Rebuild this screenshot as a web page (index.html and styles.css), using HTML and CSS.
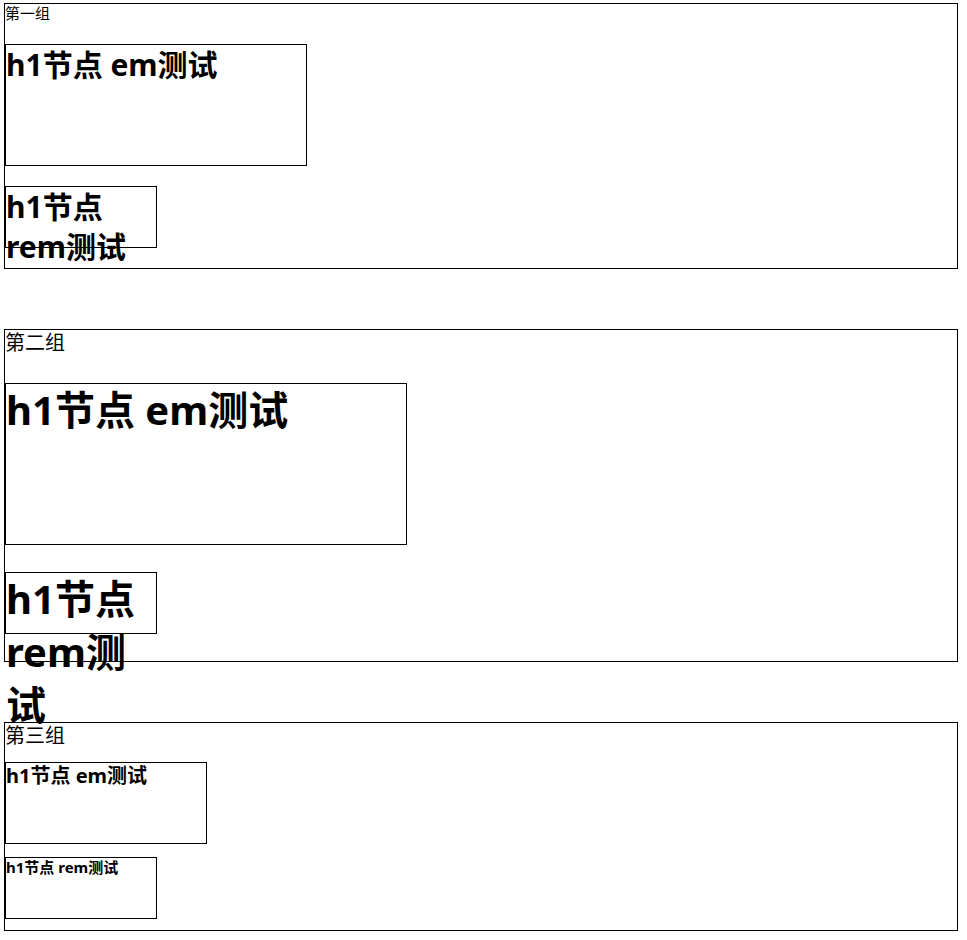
FILE: index.html
```html
<!DOCTYPE html>
<html lang="zh-CN">
<head>
<meta charset="utf-8">
<title>em rem 测试</title>
<link rel="stylesheet" href="styles.css">
</head>
<body>
  <div class="group g1">
    <div class="label">第一组</div>
    <h1 class="box-em">h1节点 em测试</h1>
    <h1 class="box-rem">h1节点 rem测试</h1>
  </div>
  <div class="group g2">
    <div class="label">第二组</div>
    <h1 class="box-em">h1节点 em测试</h1>
    <h1 class="box-rem">h1节点 rem测试</h1>
  </div>
  <div class="group g3">
    <div class="label">第三组</div>
    <h1 class="box-em">h1节点 em测试</h1>
    <h1 class="box-rem">h1节点 rem测试</h1>
  </div>
</body>
</html>
```

FILE: styles.css
```css
html {
  font-size: 10px;
}

body {
  margin: 3px 9px 0 4px;
  font-family: "Noto Sans", "Noto Sans CJK SC", sans-serif;
  color: #000;
  background: #fff;
  line-height: 1.32;
}

.group {
  border: 1px solid #000;
}

.group + .group {
  margin-top: 60px;
}

.label {
  font-weight: normal;
}

.box-em,
.box-rem {
  margin: 0.67em 0;
  border: 1px solid #000;
  font-weight: bold;
  line-height: 1.32;
}

.box-em {
  width: 10em;
  height: 4em;
}

.box-rem {
  width: 15rem;
  height: 6rem;
}

.g1 { font-size: 15px; }
.g1 .box-em,
.g1 .box-rem { font-size: 30px; }

.g2 { font-size: 20px; }
.g2 .box-em,
.g2 .box-rem { font-size: 40px; }

.g3 { font-size: 20px; }
.g3 .label { line-height: 1.28; }
.g3 .box-em { font-size: 20px; }
.g3 .box-rem {
  font-size: 15px;
  margin-bottom: 0.75em;
}
```
